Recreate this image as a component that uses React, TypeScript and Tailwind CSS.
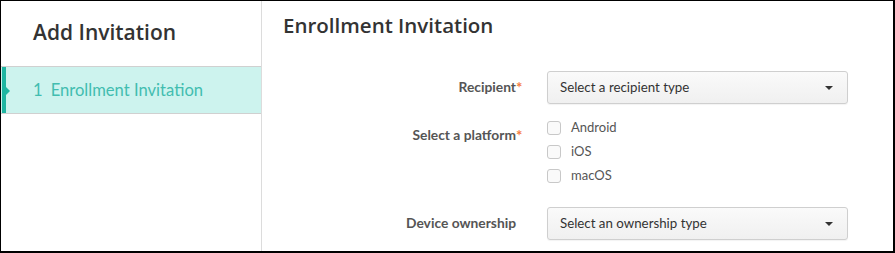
import React from "react";

const font = { fontFamily: "Lato, 'Open Sans', sans-serif" };
const head = { fontFamily: "'Open Sans', Lato, sans-serif" };

function Select({ text }: { text: string }) {
  return (
    <div className="w-[301px] h-[33px] rounded-[3px] border border-[#cfcfcf] bg-gradient-to-b from-[#fafafa] to-[#f0f0f0] flex items-center pl-[12px] pr-[14px] shadow-[0_1px_1px_rgba(0,0,0,0.05)]">
      <span className="flex-1 text-[13.3px] text-[#333]">{text}</span>
      <svg width="8" height="4" viewBox="0 0 8 4">
        <path d="M0 0 H8 L4 4 Z" fill="#333" />
      </svg>
    </div>
  );
}

function Check({ label }: { label: string }) {
  return (
    <div className="flex items-center h-[24px]">
      <div className="w-[14px] h-[14px] rounded-[3px] border border-[#c8c8c8] bg-[#fafafa]" />
      <span className="ml-[10px] text-[13px] text-[#555]">{label}</span>
    </div>
  );
}

export default function App() {
  return (
    <div
      style={font}
      className="w-[895px] h-[253px] bg-white border-t border-l border-r-2 border-b-2 border-black flex overflow-hidden"
    >
      <div className="w-[261px] shrink-0 border-r border-[#dcdcdc] flex flex-col">
        <div style={head} className="pl-[32px] pt-[16px] h-[65px] text-[21px] leading-[30px] font-semibold text-[#333]">
          Add Invitation
        </div>
        <div className="relative h-[48px] border-t border-b border-[#d0d0d0] bg-[#cdf3ee] flex items-center pl-[32px] text-[16.6px] text-[#42bdb0]">
          <div className="absolute left-[1px] top-0 bottom-0 w-[4px] bg-[#1fb5a1]" />
          <div className="absolute left-[5px] top-[20px] w-0 h-0 border-y-[4px] border-y-transparent border-l-[4px] border-l-[#1fb5a1]" />
          <span>1</span>
          <span className="ml-[8px]">Enrollment Invitation</span>
        </div>
      </div>
      <div className="flex-1 flex flex-col">
        <div style={head} className="pl-[21px] pt-[9px] h-[70px] text-[20.5px] leading-[30px] font-semibold text-[#333]">
          Enrollment Invitation
        </div>
        <div className="flex items-center">
          <div className="w-[254px] text-right text-[13.8px] font-bold text-[#555] relative">
            Recipient<span className="absolute left-full top-[-1px] text-[15px] text-[#f47b3f]">*</span>
          </div>
          <div className="ml-[31px]">
            <Select text="Select a recipient type" />
          </div>
        </div>
        <div className="flex mt-[12px]">
          <div className="w-[254px] text-right text-[13.8px] font-bold text-[#555] relative pt-[9px]">
            Select a platform<span className="absolute left-full top-[8px] text-[15px] text-[#f47b3f]">*</span>
          </div>
          <div className="ml-[31px] flex flex-col">
            <Check label="Android" />
            <Check label="iOS" />
            <Check label="macOS" />
          </div>
        </div>
        <div className="flex items-center mt-[19px]">
          <div className="w-[254px] text-right text-[13.8px] font-bold text-[#555]">
            Device ownership
          </div>
          <div className="ml-[31px]">
            <Select text="Select an ownership type" />
          </div>
        </div>
      </div>
    </div>
  );
}
